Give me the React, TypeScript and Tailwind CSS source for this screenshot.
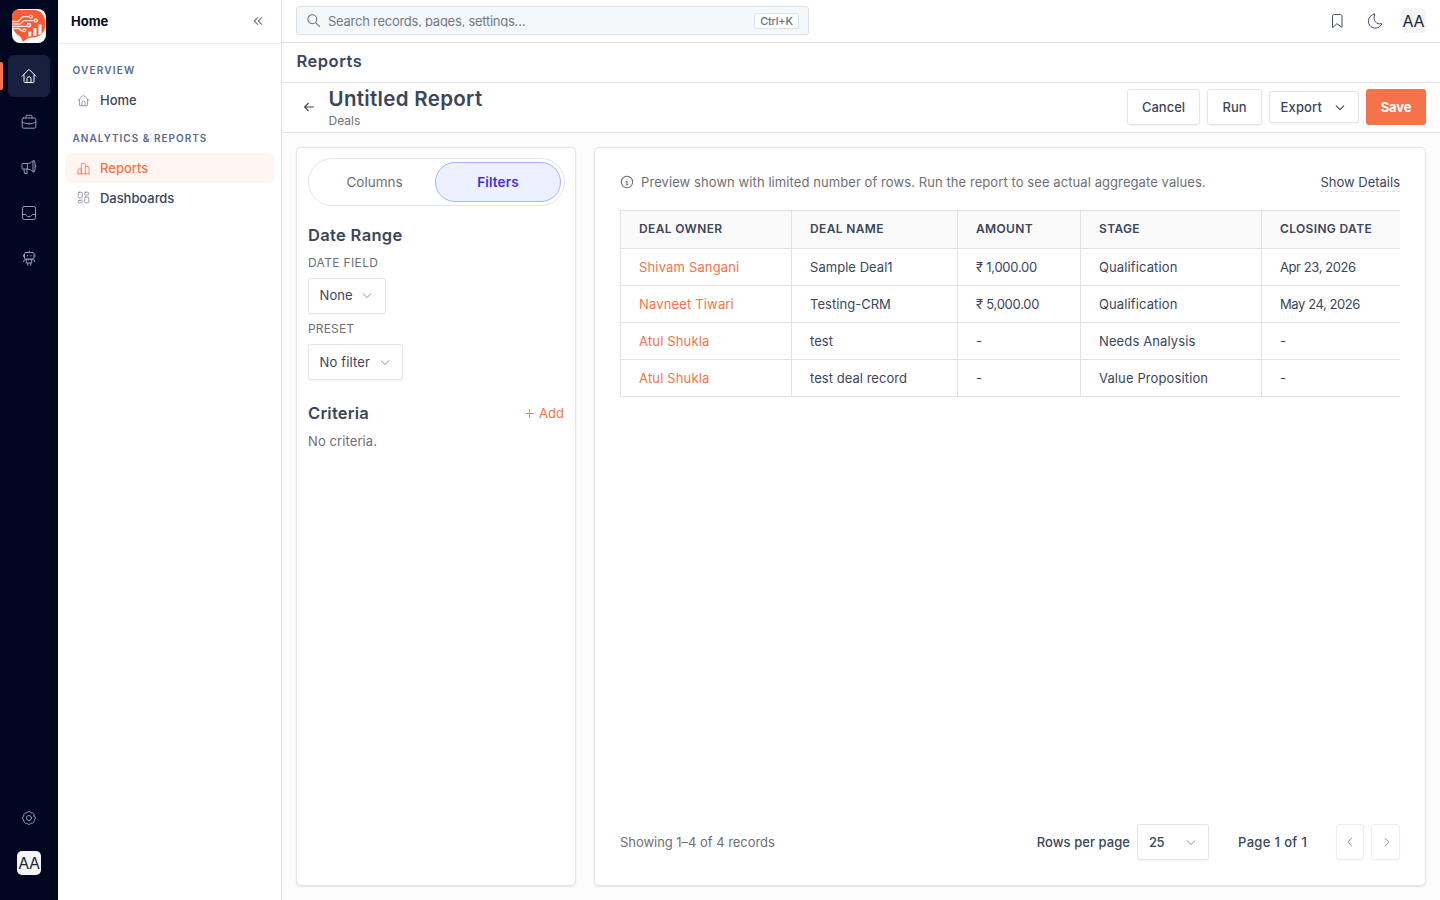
import type { ReactNode } from "react";

type IconProps = { className?: string; children?: ReactNode };

const Icon = ({ className = "w-4 h-4", children }: IconProps) => (
  <svg
    className={`shrink-0 ${className}`}
    viewBox="0 0 16 16"
    fill="none"
    stroke="currentColor"
    strokeWidth="1"
    strokeLinecap="round"
    strokeLinejoin="round"
  >
    {children}
  </svg>
);

const HomeIcon = ({ className }: IconProps) => (
  <Icon className={className}>
    <path d="M1.2 8.2 7.3 1.9a1 1 0 0 1 1.4 0l6.1 6.3" />
    <path d="M3 7v6.6c0 .5.3.9.8.9h8.4c.5 0 .8-.4.8-.9V7" />
    <path d="M6 14.3v-3.6a2 2 0 0 1 4 0v3.6" />
  </Icon>
);

const BriefcaseIcon = () => (
  <Icon>
    <rect x="1.2" y="4" width="13.6" height="10.2" rx="1.4" />
    <path d="M5 4V2.400c0-.7.4-1.100 1.100-1.100h3.800c.7 0 1.100.4 1.100 1.100V4M1.200 8c2 1.200 4.200 1.800 6.800 1.800s4.800-.6 6.800-1.800M8 9v1" />
  </Icon>
);

const MegaphoneIcon = () => (
  <Icon>
    <path d="M6.400 4.500H1.600a.6.6 0 0 0-.6.6v4.400c0 .3.300.6.600.6h4.800c2.200 0 4 .9 5.600 2.800V1.700c-1.600 1.900-3.400 2.800-5.600 2.800ZM6.400 4.500v5.600M2.900 10.100l.6 4.400h2.700l-.4-4.400M12 1.700c.5-.5 1.300-.4 1.500.3 1 3.400 1 7.200 0 10.600-.2.7-1 .8-1.500.3" />
    <path d="M14.200 6.300c1 .3 1 1.700 0 2" />
  </Icon>
);

const InboxIcon = () => (
  <Icon>
    <rect x="1.500" y="1.500" width="13" height="13" rx="1.600" />
    <path d="M1.500 9.500h2.800c.7 0 .9.500 1.200 1 .5.800 1.300 1.300 2.500 1.300s2-.5 2.500-1.300c.3-.5.5-1 1.200-1h2.800" />
  </Icon>
);

const RobotIcon = () => (
  <Icon>
    <rect x="3.500" y="2.500" width="9.500" height="6.500" rx="1" />
    <path d="M8.200 2.500V1M6.500 5.400v.5M10 5.400v.5M2.500 5v1.500M14 5v1.500M5.700 9.700h5v3.300h-5ZM5.700 9.700H4.200a1.500 1.500 0 0 0-1.500 1.500v.5M10.700 9.700h1.500a1.500 1.500 0 0 1 1.500 1.500v.5M6.700 13v2.300M9.700 13v2.300" />
  </Icon>
);

const GearIcon = () => (
  <Icon>
    <circle cx="8" cy="8" r="2.500" />
    <path d="M13.080 5.900a2.300 2.300 0 0 1 0 4.200a2.300 2.300 0 0 1-2.980 2.980a2.300 2.300 0 0 1-4.200 0a2.300 2.300 0 0 1-2.980-2.980a2.300 2.300 0 0 1 0-4.200a2.300 2.300 0 0 1 2.980-2.980a2.300 2.300 0 0 1 4.200 0a2.300 2.300 0 0 1 2.980 2.980Z" />
  </Icon>
);

const ChartIcon = () => (
  <Icon className="w-[13px] h-[13px]">
    <path d="M1.200 14.500h13.600M1.200 14.500V9.200c0-.4.300-.7.700-.7h3.400v6M5.300 14.500V2.600c0-.6.400-1 1-1h2.900c.6 0 1 .4 1 1v11.900M10.200 5.700h3.600c.6 0 1 .4 1 1v7.800" />
  </Icon>
);

const GridIcon = () => (
  <Icon className="mb-px w-[13px] h-[13px]">
    <rect x="1.500" y="1.500" width="5" height="7" rx="1.200" />
    <rect x="9.500" y="1.500" width="5" height="3.500" rx="1.200" />
    <rect x="1.500" y="11.500" width="5" height="3" rx="1.200" />
    <rect x="9.500" y="7.500" width="5" height="7" rx="1.200" />
  </Icon>
);

const ChevronDown = ({ className = "text-[#b3b3b6]" }: IconProps) => (
  <Icon className={`w-3 h-3 ${className}`}>
    <path d="m3 5.200 5 5 5-5" strokeWidth="1.400" />
  </Icon>
);

const Logo = () => (
  <svg className="w-[34px] h-[34px] rounded-lg shrink-0" viewBox="0 0 34 34">
    <rect width="34" height="34" fill="#fff" />
    <path
      d="M2 1h20c7 0 11.500 6 11.500 13.500 0 8.500-5 13.500-12 14-3.500.2-6.500.5-10.500 4.500-.8-2-1.500-4.500-3.500-6C3 24.500 0 20 0 14V4c0-2 .5-3 2-3Z"
      fill="#fb5a35"
    />
    <g fill="none" stroke="#ffe3da" strokeWidth="1.300">
      <path d="M0 12.500h6l5-4.800h6M0 15h8l4-3.400h10M0 17.300h15M0 19.500h7l2 2h2" />
      <circle cx="18.800" cy="7.700" r="1.500" />
      <circle cx="23.800" cy="11.500" r="1.500" />
      <circle cx="16.900" cy="16.200" r="1.700" fill="#fb5a35" stroke="#fff" />
      <circle cx="12.300" cy="21.300" r="1.400" />
    </g>
    <path d="M16.300 22.500h3v4.800l-3 .5ZM21.300 19h3.200v7.500l-3.200.6ZM26.500 15.500h3v9.300l-3 1.200Z" fill="#fff" />
  </svg>
);

const railItems = [BriefcaseIcon, MegaphoneIcon, InboxIcon, RobotIcon];

const Rail = () => (
  <aside className="w-[58px] shrink-0 bg-[#00071f] flex flex-col items-center pt-[9px] pb-[25px] text-[#949cb8]">
    <Logo />
    <div className="relative mt-3 w-full flex justify-center">
      <span className="absolute left-0 top-[7px] w-[3px] h-7 bg-[#f5734b] rounded-r-[2px]" />
      <div className="w-[42px] h-[42px] rounded-md bg-[#182040] flex items-center justify-center text-white">
        <HomeIcon className="w-4 h-4" />
      </div>
    </div>
    {railItems.map((Item, i) => (
      <div key={i} className="mt-[3.600px] h-[42px] flex items-center">
        <Item />
      </div>
    ))}
    <div className="mt-auto">
      <GearIcon />
    </div>
    <div className="mt-[25px] w-6 h-6 rounded-[5px] bg-[#f5f5f5] text-[#1b2436] text-[16px] tracking-[-0.300px] flex items-center justify-center">
      AA
    </div>
  </aside>
);

const Sidebar = () => (
  <nav className="w-[224px] shrink-0 bg-white border-r border-[#dfe1e8] flex flex-col text-[13px] font-medium text-[#3b4659]">
    <div className="h-11 border-b border-[#ededf1] flex items-center justify-between pl-[13px] pr-[18px]">
      <span className="text-[13px] font-bold text-[#03091f]">Home</span>
      <Icon className="mb-0.5 w-[10px] h-[10px] text-[#6b7390]">
        <path d="M7.500 2.500 2 8l5.500 5.500M14 2.500 8.500 8l5.500 5.500" strokeWidth="1.700" />
      </Icon>
    </div>
    <div className="px-[7px] pt-[17px]">
      <h3 className="pl-[7.500px] h-[18px] leading-[18px] text-[10px] font-semibold tracking-[1.200px] text-[#5b6a8d]">OVERVIEW</h3>
      <div className="mt-1.5 h-[30px] pl-3 flex items-center gap-[10px] rounded-md">
        <HomeIcon className="w-[13px] h-[13px] text-[#7f859c]" />
        <span className="pt-px">Home</span>
      </div>
      <h3 className="mt-[14px] pl-[7.500px] h-[18px] leading-[18px] text-[10px] font-semibold tracking-[1.010px] text-[#5b6a8d]">
        ANALYTICS &amp; REPORTS
      </h3>
      <div className="mt-1.5 h-[30px] pl-3 flex items-center gap-[10px] rounded-md bg-[#fff6f3] text-[#f5734b]">
        <ChartIcon />
        <span className="pt-px">Reports</span>
      </div>
      <div className="h-[30px] pl-3 flex items-center gap-[10px] rounded-md">
        <span className="text-[#7f859c]">
          <GridIcon />
        </span>
        <span className="pt-px tracking-[-0.050px]">Dashboards</span>
      </div>
    </div>
  </nav>
);

const TopBar = () => (
  <header className="h-[43px] shrink-0 border-b border-[#dfe1e8] bg-white flex items-start justify-between pl-[14px] pr-[14px]">
    <div className="mt-1.5 w-[513px] h-[29px] rounded-[3px] border border-[#dde1ea] bg-[#f4f8fb] flex items-center pl-[10px] pr-[9px]">
      <Icon className="mb-px w-[13px] h-[13px] text-[#6b7080]">
        <circle cx="6.500" cy="6.500" r="5.500" strokeWidth="1.300" />
        <path d="m10.500 10.500 4.800 4.800" strokeWidth="1.300" />
      </Icon>
      <div className="ml-2 h-[13px] overflow-hidden leading-[15px] text-[13px] text-[#737983] tracking-[-0.260px]">
        Search records, pages, settings…
      </div>
      <kbd className="ml-auto w-[45px] h-4 rounded-[3px] border border-[#dde1ea] bg-white flex items-center justify-center pt-px text-[11px] font-medium text-[#6b7182] tracking-[-0.200px] font-[Inter,sans-serif]">
        Ctrl+K
      </kbd>
    </div>
    <div className="mt-2 h-[25px] flex items-center text-[#454d66]">
      <Icon className="w-4 h-4">
        <path d="M3.500 14.300V3.200c0-1 .6-1.700 1.600-1.700h6.300c1 0 1.600.7 1.600 1.700v11.100l-4.750-3.400Z" />
      </Icon>
      <Icon className="ml-[22px] w-4 h-4">
        <path d="M7.200 1.200a7 7 0 1 0 7.500 9.800c.1-.3-.2-.5-.5-.4C9.500 12 5.300 7 7.700 1.900c.2-.4 0-.7-.5-.7Z" />
      </Icon>
      <div className="ml-[18px] w-[25px] h-[25px] rounded-[5px] bg-[#f5f5f5] text-[#1b2436] text-[16px] tracking-[-0.100px] flex items-center justify-center">
        AA
      </div>
    </div>
  </header>
);

const buttonBase =
  "rounded-[3px] border border-[#e5e5e5] bg-white flex items-center shadow-[0_1px_2px_rgba(0,0,0,0.05)]";

const ReportHeader = () => (
  <div className="h-[50px] shrink-0 border-b border-[#e2e3e7] bg-white flex items-center pl-[22px] pr-[14px] pb-px">
    <Icon className="w-[10px] h-[10px] text-[#3b4659]">
      <path d="M15 8H1M7 2 1 8l6 6" strokeWidth="1.700" />
    </Icon>
    <div className="ml-[14.500px] pt-0.5">
      <h1 className="text-[20.500px] leading-6 font-semibold tracking-[0.320px]">Untitled Report</h1>
      <p className="mt-px text-xs leading-[18px] text-[#6f6f73]">Deals</p>
    </div>
    <div className="ml-auto flex items-center gap-[7px] text-[13px] font-medium">
      <button className={`${buttonBase} w-[73px] h-9 pt-px justify-center`}>Cancel</button>
      <button className={`${buttonBase} w-[55px] h-9 pt-px justify-center`}>Run</button>
      <button className={`${buttonBase} w-[90px] h-8 pl-[10.500px] pt-px pr-3 justify-between tracking-[0.150px]`}>
        Export
        <ChevronDown className="text-[#3b4659]" />
      </button>
      <button className="w-[60px] h-9 pt-px rounded-[3px] bg-[#f5734b] text-white font-bold tracking-[-0.100px]">Save</button>
    </div>
  </div>
);

const cardBase =
  "rounded-[5px] border border-[#e5e5e5] bg-white shadow-[0_1px_2px_rgba(0,0,0,0.1)]";

const FiltersPanel = () => (
  <section className={`${cardBase} w-[280px] shrink-0 px-[11px] pt-[10px]`}>
    <div className="w-[257px] h-12 rounded-full border border-[#e5e5e5] p-[3px] flex text-[13.500px]">
      <div className="flex-1 flex items-center justify-center pt-px pl-0.5 text-[#6f6f73]">Columns</div>
      <div className="w-[126px] rounded-full border border-[#a3b3ff] bg-[#edf1ff] flex items-center justify-center pt-px font-semibold text-[#432dd7] tracking-[0.150px]">
        Filters
      </div>
    </div>
    <h2 className="mt-[17px] text-[16.500px] leading-6 font-semibold tracking-[0.330px]">Date Range</h2>
    <p className="mt-[7px] text-xs leading-[18px] text-[#6f6f73] tracking-[0.350px]">DATE FIELD</p>
    <button className={`${buttonBase} mt-1.5 w-[78px] h-9 pl-[10.500px] pr-3 justify-between text-[13px] tracking-[0.100px]`}>
      None
      <ChevronDown />
    </button>
    <p className="mt-1.5 text-xs leading-[18px] text-[#6f6f73] tracking-[0.150px]">PRESET</p>
    <button className={`${buttonBase} mt-1.5 w-[95px] h-9 pl-[10.500px] pt-px pr-[11px] justify-between text-[13px] tracking-[0.150px]`}>
      No filter
      <ChevronDown />
    </button>
    <div className="mt-[21px] h-6 flex items-center justify-between">
      <h2 className="text-[16.500px] font-semibold tracking-[0.230px]">Criteria</h2>
      <span className="flex items-center gap-[5px] pt-px text-[13px] text-[#f5734b]">
        <Icon className="w-[9px] h-[9px]">
          <path d="M8 1v14M1 8h14" strokeWidth="1.600" />
        </Icon>
        Add
      </span>
    </div>
    <p className="mt-1.5 text-[13px] leading-5 text-[#6f6f73] tracking-[0.100px]">No criteria.</p>
  </section>
);

const columns = [
  { label: "DEAL OWNER", width: "w-[171px]", cell: "text-[#f5734b] tracking-[0.160px]" },
  { label: "DEAL NAME", width: "w-[166px]", cell: "tracking-[0.040px]" },
  { label: "AMOUNT", width: "w-[123px]", cell: "tracking-[-0.250px]" },
  { label: "STAGE", width: "w-[181px]", cell: "tracking-[0.120px]" },
  { label: "CLOSING DATE", width: "w-[139px]", cell: "tracking-[-0.420px]" },
];

const rows = [
  ["Shivam Sangani", "Sample Deal1", "₹ 1,000.00", "Qualification", "Apr 23, 2026"],
  ["Navneet Tiwari", "Testing-CRM", "₹ 5,000.00", "Qualification", "May 24, 2026"],
  ["Atul Shukla", "test", "-", "Needs Analysis", "-"],
  ["Atul Shukla", "test deal record", "-", "Value Proposition", "-"],
];

const DealsTable = () => (
  <table className="mt-[18px] w-[780px] table-fixed border-separate border-spacing-0 text-left">
    <thead>
      <tr className="h-[39px] bg-[#fafafa]">
        {columns.map((col) => (
          <th
            key={col.label}
            className={`${col.width} border-t border-b border-l border-[#e2e2e4] p-0 pl-[18px] pb-0.5 text-xs font-semibold tracking-[0.350px]`}
          >
            {col.label}
          </th>
        ))}
      </tr>
    </thead>
    <tbody>
      {rows.map((row, i) => (
        <tr key={i} className="h-[37px]">
          {row.map((cell, j) => (
            <td key={j} className={`border-b border-l border-[#e2e2e4] p-0 pl-[18px] pt-0.5 text-[13px] ${columns[j].cell}`}>
              {cell}
            </td>
          ))}
        </tr>
      ))}
    </tbody>
  </table>
);

const Pagination = () => (
  <div className="mt-auto h-9 flex items-center text-[13px] font-medium">
    <span className="pt-px font-normal text-[#6f6f73] tracking-[-0.040px]">Showing 1–4 of 4 records</span>
    <span className="ml-auto pt-px tracking-[0.050px]">Rows per page</span>
    <button className={`${buttonBase} ml-[7px] w-[72px] h-9 pl-[11px] pt-px pr-[11px] justify-between tracking-[-0.500px]`}>
      25
      <ChevronDown />
    </button>
    <span className="ml-[29px] pt-px w-[70px] whitespace-nowrap tracking-[0.350px]">Page 1 of 1</span>
    <button className={`${buttonBase} ml-7 w-7 h-9 justify-center opacity-60`}>
      <Icon className="w-[10px] h-[10px]">
        <path d="M10.500 2 4.500 8l6 6" strokeWidth="1.600" />
      </Icon>
    </button>
    <button className={`${buttonBase} ml-[7px] w-[29px] h-9 justify-center opacity-60`}>
      <Icon className="w-[10px] h-[10px]">
        <path d="m6.500 2 6 6-6 6" strokeWidth="1.600" />
      </Icon>
    </button>
  </div>
);

const PreviewPanel = () => (
  <section className={`${cardBase} w-[832px] px-[25px] pt-6 pb-[25px] flex flex-col`}>
    <div className="h-5 flex items-center">
      <Icon className="w-[14px] h-[14px] text-[#6f6f73]">
        <circle cx="8" cy="8" r="6.500" strokeWidth="1.200" />
        <path d="M8 11.200V7.500H7M8 4.800v.2M7 11.200h2" strokeWidth="1.200" />
      </Icon>
      <span className="ml-[7px] pt-px text-[13px] text-[#6f6f73] tracking-[0.080px]">
        Preview shown with limited number of rows. Run the report to see actual aggregate values.
      </span>
      <span className="ml-auto text-[13px] leading-[18px] border-b border-dashed border-[#dcdde0]">Show Details</span>
    </div>
    <DealsTable />
    <Pagination />
  </section>
);

export default function App() {
  return (
    <div className="w-[1440px] h-[900px] overflow-hidden flex bg-[#fcfcfc] text-[#3b4659] font-[Inter,sans-serif]">
      <Rail />
      <Sidebar />
      <div className="flex-1 min-w-0 flex flex-col">
        <TopBar />
        <div className="h-10 shrink-0 border-b border-[#e2e3e7] bg-white flex items-center pl-[14.500px] pb-0.5">
          <h2 className="text-[16.500px] font-semibold tracking-[0.500px]">Reports</h2>
        </div>
        <ReportHeader />
        <main className="flex-1 flex gap-[18px] px-[14px] pt-[14px] pb-[14px]">
          <FiltersPanel />
          <PreviewPanel />
        </main>
      </div>
    </div>
  );
}
